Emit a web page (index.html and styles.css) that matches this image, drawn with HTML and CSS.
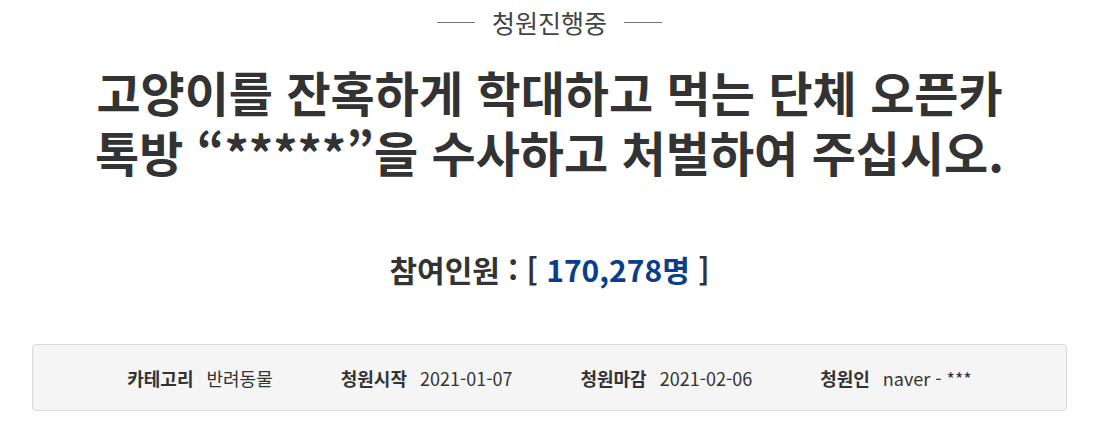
FILE: index.html
```html
<!DOCTYPE html>
<html lang="ko">
<head>
<meta charset="utf-8">
<link rel="stylesheet" href="styles.css">
</head>
<body>
<div class="page">
  <div class="status"><span class="line"></span><span class="status-text">청원진행중</span><span class="line"></span></div>
  <h1 class="title"><span class="tl">고양이를 잔혹하게 학대하고 먹는 단체 오픈카</span><span class="tl">톡방 “*****”을 수사하고 처벌하여 주십시오.</span></h1>
  <div class="count">참여인원 : [ <span class="num">170,278명</span> ]</div>
  <div class="info">
    <div class="item"><span class="label">카테고리</span><span class="value">반려동물</span></div>
    <div class="item"><span class="label">청원시작</span><span class="value">2021-01-07</span></div>
    <div class="item"><span class="label">청원마감</span><span class="value">2021-02-06</span></div>
    <div class="item"><span class="label">청원인</span><span class="value">naver - ***</span></div>
  </div>
</div>
</body>
</html>
```
FILE: styles.css
```css
html, body { margin: 0; padding: 0; background: #fff; }
body { font-family: "Noto Sans CJK KR", "Noto Sans", sans-serif; color: #333; }
.page { width: 1098px; padding: 0 31px 0 32px; box-sizing: border-box; }
.status { display: flex; justify-content: center; align-items: center; gap: 17px; height: 44px; }
.line { display: block; width: 38px; height: 1px; background: #777; }
.status-text { font-size: 25px; color: #444; line-height: 44px; }
.title { margin: 17px 0 0; display: flex; flex-direction: column; align-items: center; font-size: 48px; font-weight: 700; line-height: 60px; color: #333; }
.tl { display: block; white-space: nowrap; }
.count { margin-top: 63px; text-align: center; font-size: 30px; font-weight: 700; line-height: 50px; color: #333; }
.num { color: #0b3d8a; }
.info { margin-top: 50px; height: 67px; box-sizing: border-box; background: #f5f5f5; border: 1px solid #d8d8d8; border-radius: 4px; display: flex; justify-content: center; align-items: center; gap: 68px; font-size: 18px; }
.item { display: flex; gap: 13px; align-items: baseline; }
.label { font-weight: 700; color: #333; }
.value { color: #333; }
```
